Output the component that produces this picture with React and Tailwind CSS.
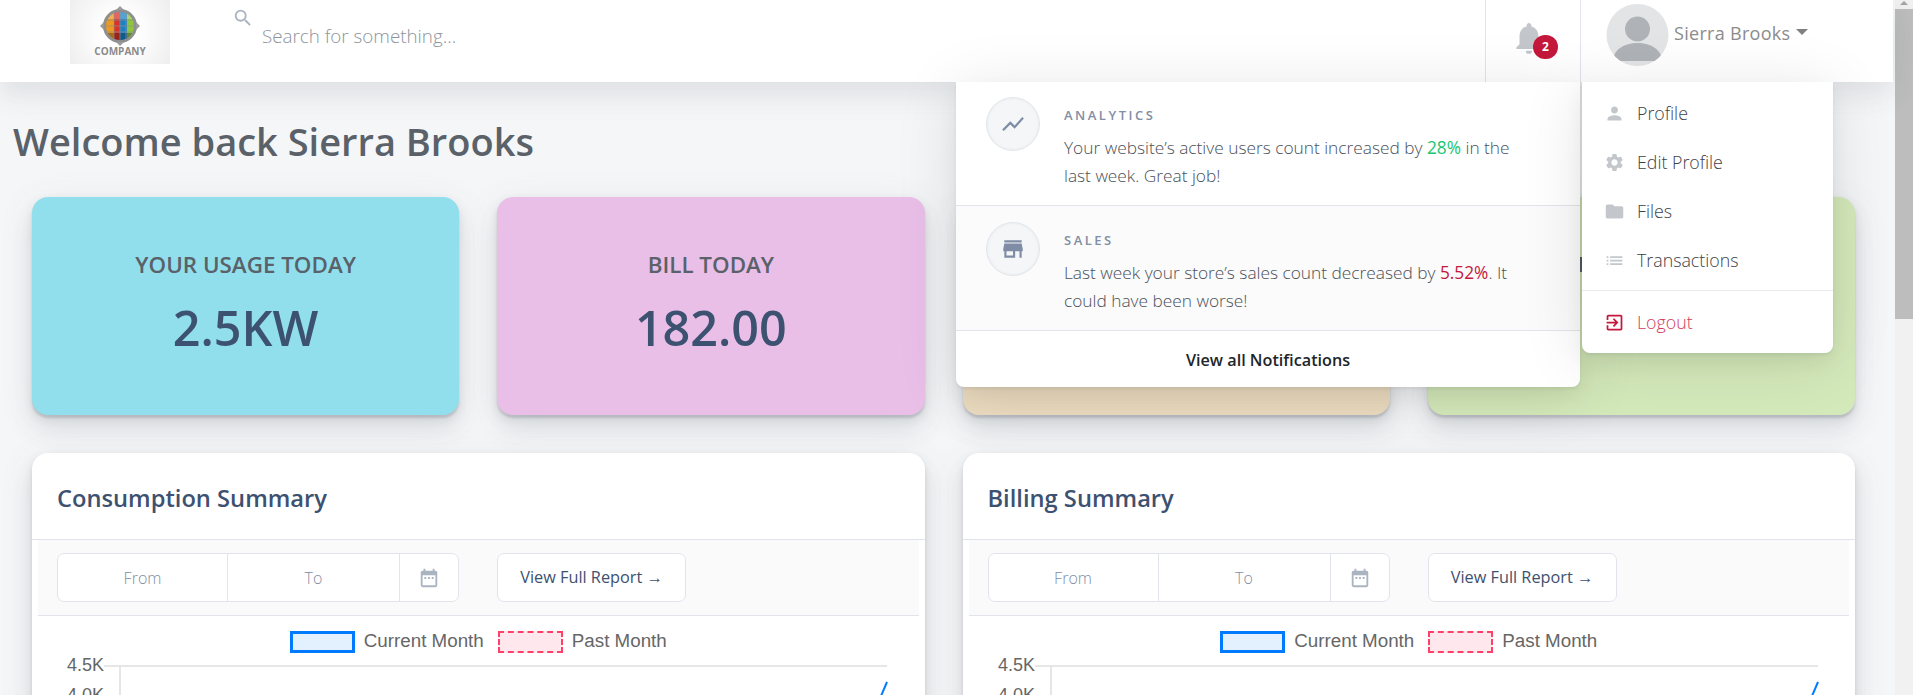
import React from "react";
import { MdSearch, MdNotifications, MdPerson, MdSettings, MdFolder, MdList, MdExitToApp, MdShowChart, MdStore, MdDateRange } from "react-icons/md";

const cardShadow = "shadow-[0_7.5px_35px_rgba(90,97,105,0.1),0_15px_22.5px_rgba(90,97,105,0.1),0_4px_8.5px_rgba(90,97,105,0.12),0_2px_3px_rgba(90,97,105,0.1)]";
const statShadow = "shadow-[0_7.5px_35px_rgba(90,97,105,0.1),0_15px_22.5px_rgba(90,97,105,0.1),0_4px_8.5px_rgba(90,97,105,0.12),0_3px_2px_rgba(90,97,105,0.2)]";
const headerShadow = "shadow-[0_7.5px_35px_rgba(90,97,105,0.1),0_15px_22.5px_rgba(90,97,105,0.06)]";
const menuShadow = "shadow-[0_8px_64px_rgba(0,0,0,0.11),0_10px_20px_rgba(0,0,0,0.05),0_2px_3px_rgba(0,0,0,0.06)]";

function Logo() {
    return (
        <div className="ml-[70px] w-[100px] h-[64px] shrink-0 flex flex-col items-center bg-[radial-gradient(circle,#ffffff_30%,#eeeeee_100%)]">
            <svg width="44" height="44" viewBox="0 0 44 44" className="mt-[4px]">
                <defs>
                    <clipPath id="globe">
                        <circle cx="22" cy="22" r="14" />
                    </clipPath>
                </defs>
                <circle cx="22" cy="22" r="17" fill="#8f8f8f" />
                <path d="M22 2l4 4h-8zM22 42l4-4h-8zM2 22l4-4v8zM42 22l-4-4v8z" fill="#9a9a9a" />
                <g clipPath="url(#globe)">
                    <rect x="8" y="8" width="8" height="28" fill="#ec9a20" />
                    <rect x="16" y="8" width="6" height="28" fill="#dd3128" />
                    <rect x="22" y="8" width="7" height="28" fill="#1b82c6" />
                    <rect x="29" y="8" width="7" height="28" fill="#8cc63f" />
                    <rect x="8" y="8" width="28" height="7" fill="#ffffff" opacity="0.25" />
                    <rect x="8" y="29" width="28" height="7" fill="#000000" opacity="0.3" />
                    <path d="M8 16h28M8 22h28M8 28h28M16 8v28M22 8v28M28 8v28" stroke="#8f8f8f" strokeWidth="1" fill="none" opacity="0.7" />
                </g>
            </svg>
            <span className="mt-[-4px] text-[10px] leading-[14px] font-bold text-[#8b8b8b]">COMPANY</span>
        </div>
    );
}

function Avatar() {
    return (
        <svg width="63" height="62" viewBox="0 0 63 62" className="shrink-0">
            <defs>
                <clipPath id="avatarClip">
                    <circle cx="31.5" cy="31" r="31" />
                </clipPath>
            </defs>
            <circle cx="31.5" cy="31" r="31" fill="#e3e4e6" />
            <g clipPath="url(#avatarClip)">
                <circle cx="31.5" cy="25" r="12.5" fill="#afb2b6" />
                <path d="M7 57c0-11 11-18 24.5-18S56 46 56 57z" fill="#afb2b6" />
            </g>
        </svg>
    );
}

function NoteRow({ icon, title, top, children, className }) {
    return (
        <div className={`flex items-start border-b border-[#e1e5eb] ${className}`}>
            <div className="ml-[30px] w-[54px] h-[54px] shrink-0 rounded-full bg-[#f5f6f8] border border-[#e1e5eb] shadow-[inset_0_0_3px_rgba(90,97,105,0.1)] flex items-center justify-center text-[#7f8ca6] text-[26px]">
                {icon}
            </div>
            <div className={`ml-[24px] w-[460px] ${top}`}>
                <div className="text-[13px] leading-[16px] font-semibold tracking-[2.5px] text-[#818ea3]">{title}</div>
                <p className="mt-[11px] text-[17.3px] leading-[28px] font-light text-[#4a5058]">{children}</p>
            </div>
        </div>
    );
}

function NotificationsMenu() {
    return (
        <div className={`absolute top-[82px] left-[956px] w-[624px] h-[305px] bg-white rounded-b-[8px] overflow-hidden ${menuShadow}`}>
            <NoteRow className="h-[124px] pt-[15px]" top="pt-[10px]" title="ANALYTICS" icon={<MdShowChart />}>
                Your website’s active users count increased by <span className="font-normal text-[#17c671]">28%</span> in the last week. Great job!
            </NoteRow>
            <NoteRow className="h-[125px] pt-[16px] bg-[#fbfbfb]" top="pt-[10px]" title="SALES" icon={<MdStore />}>
                Last week your store’s sales count decreased by <span className="font-normal text-[#c4183c]">5.52%</span>. It could have been worse!
            </NoteRow>
            <div className="h-[56px] pt-[3px] flex items-center justify-center text-[16.2px] font-semibold text-[#212529]">View all Notifications</div>
        </div>
    );
}

function MenuItem({ icon, label }) {
    return (
        <div className="h-[49px] pl-[22px] flex items-center text-[17.8px] font-light text-[#3d4148]">
            <span className="w-[21px] text-[21px] text-[#c3c7cc] flex justify-center">{icon}</span>
            <span className="ml-[12px]">{label}</span>
        </div>
    );
}

function ProfileMenu() {
    return (
        <div className={`absolute top-[82px] left-[1582px] w-[251px] h-[271px] bg-white rounded-b-[8px] pt-[7px] ${menuShadow}`}>
            <MenuItem icon={<MdPerson />} label="Profile" />
            <MenuItem icon={<MdSettings />} label="Edit Profile" />
            <MenuItem icon={<MdFolder />} label="Files" />
            <MenuItem icon={<MdList />} label="Transactions" />
            <div className="mt-[5px] border-t border-[#e9ecef]" />
            <div className="h-[63px] pl-[22px] flex items-center text-[17.8px] font-light text-[#d23a60]">
                <span className="w-[21px] text-[21px] text-[#c4183c] flex justify-center"><MdExitToApp /></span>
                <span className="ml-[12px]">Logout</span>
            </div>
        </div>
    );
}

function Header() {
    return (
        <header className={`relative z-10 h-[82px] w-[1893px] flex bg-white ${headerShadow}`}>
            <Logo />
            <div className="flex-1 flex items-start">
                <MdSearch className="ml-[62px] mt-[7px] text-[22px] text-[#aab4c1]" />
                <span className="ml-[8px] mt-[22px] text-[18.8px] font-light text-[#8e949c]">Search for something...</span>
            </div>
            <div className="w-[95px] border-l border-[#e1e5eb] relative shrink-0">
                <MdNotifications className="absolute left-[24px] top-[19px] text-[38px] text-[#c3c7cc]" />
                <span className="absolute left-[47px] top-[35px] w-[25px] h-[24px] rounded-full bg-[#c4183c] text-white text-[12px] font-bold flex items-center justify-center">2</span>
            </div>
            <div className="w-[313px] border-l border-[#e1e5eb] shrink-0 flex items-start pl-[25px] pt-[4px]">
                <Avatar />
                <span className="ml-[5px] mt-[16px] text-[18px] leading-[26px] tracking-[0.3px] text-[#8c8c8c]">Sierra Brooks</span>
                <span className="ml-[5px] mt-[25px] w-0 h-0 border-x-[6px] border-x-transparent border-t-[6px] border-t-[#808080]" />
            </div>
            <NotificationsMenu />
            <ProfileMenu />
        </header>
    );
}

function StatCard({ title, value, color }) {
    return (
        <div className={`h-[218px] rounded-[16px] flex flex-col items-center pt-[54px] ${color} ${statShadow}`}>
            <div className="text-[22.4px] leading-[28px] font-semibold text-[#5a6169]">{title}</div>
            <div className="mt-[16px] text-[48.5px] leading-[64px] font-semibold text-[#3d5170]">{value}</div>
        </div>
    );
}

function Chart() {
    return (
        <svg width="892" height="60" viewBox="0 0 892 60" className="block overflow-visible">
            <line x1="72" y1="1" x2="855" y2="1" stroke="#e6e6e6" strokeWidth="2" />
            <line x1="72" y1="31" x2="88" y2="31" stroke="#e6e6e6" strokeWidth="2" />
            <line x1="88" y1="1" x2="88" y2="60" stroke="#e6e6e6" strokeWidth="2" />
            <line x1="849" y1="31" x2="855" y2="17" stroke="#007bff" strokeWidth="2" />
            <text x="72" y="6" textAnchor="end" fontSize="18" fill="#666666" fontFamily="Liberation Sans, sans-serif">4.5K</text>
            <text x="72" y="36" textAnchor="end" fontSize="18" fill="#666666" fontFamily="Liberation Sans, sans-serif">4.0K</text>
        </svg>
    );
}

function SummaryCard({ title }) {
    return (
        <div className={`h-[420px] bg-white rounded-[16px] ${cardShadow}`}>
            <div className="h-[87px] pt-[5px] flex items-center pl-[25px] border-b border-[#e1e5eb] text-[23.7px] font-semibold text-[#3d5170]">{title}</div>
            <div className="mx-[6px] h-[76px] bg-[#fafafa] border-b border-[#e1e5eb] flex items-center pl-[19px]">
                <div className="w-[402px] h-[49px] bg-white border border-[#e1e5eb] rounded-[7px] flex items-center text-[16px] font-light text-[#818ea3]">
                    <span className="w-[169px] text-center">From</span>
                    <span className="w-[172px] h-full border-l border-[#e1e5eb] flex items-center justify-center">To</span>
                    <span className="flex-1 h-full border-l border-[#e1e5eb] flex items-center justify-center text-[22px] text-[#aab4c1]"><MdDateRange /></span>
                </div>
                <div className="ml-[38px] w-[189px] h-[49px] bg-white border border-[#e1e5eb] rounded-[7px] flex items-center justify-center text-[16.3px] text-[#3d5170]">View Full Report →</div>
            </div>
            <div className="h-[49px] pt-[2px] flex items-center justify-center font-['Liberation_Sans',sans-serif] text-[18.8px] text-[#666666]">
                <span className="w-[65px] h-[22px] border-[3px] border-[#007bff] bg-[#e3f1ff]" />
                <span className="ml-[9px]">Current Month</span>
                <span className="ml-[14px] w-[65px] h-[22px] border-2 border-dashed border-[#ff4169] bg-[#ffe8ed]" />
                <span className="ml-[9px]">Past Month</span>
            </div>
            <Chart />
        </div>
    );
}

export default function App() {
    return (
        <div className="h-[695px] overflow-hidden flex bg-[#f5f6f8] font-['Open_Sans',sans-serif]">
            <div className="w-[1895px] shrink-0">
                <Header />
                <main className="pl-[32px] pr-[40px]">
                    <h1 className="ml-[-19px] h-[115px] pt-[32px] text-[38px] leading-[54px] font-semibold text-[#5a6169]">Welcome back Sierra Brooks</h1>
                    <div className="grid grid-cols-4 gap-[38px]">
                        <StatCard title="YOUR USAGE TODAY" value="2.5KW" color="bg-[#91dfec]" />
                        <StatCard title="BILL TODAY" value="182.00" color="bg-[#e9bfe8]" />
                        <div className={`h-[218px] rounded-[16px] bg-[#ecdcc0] ${statShadow}`} />
                        <div className={`h-[218px] rounded-[16px] bg-[#d4e9ba] pt-[60px] pl-[152px] ${statShadow}`}>
                            <div className="w-[2px] h-[15px] bg-[#5a6169]" />
                        </div>
                    </div>
                    <div className="mt-[38px] grid grid-cols-2 gap-[38px]">
                        <SummaryCard title="Consumption Summary" />
                        <SummaryCard title="Billing Summary" />
                    </div>
                </main>
            </div>
            <div className="w-[18px] shrink-0 bg-[#f1f1f1] flex flex-col items-center">
                <div className="h-[9px] flex items-start justify-center pt-[1px]">
                    <div className="w-0 h-0 border-x-[4px] border-x-transparent border-b-[4px] border-b-[#a3a3a3]" />
                </div>
                <div className="w-full h-[310px] bg-[#bdbdbd]" />
            </div>
        </div>
    );
}
